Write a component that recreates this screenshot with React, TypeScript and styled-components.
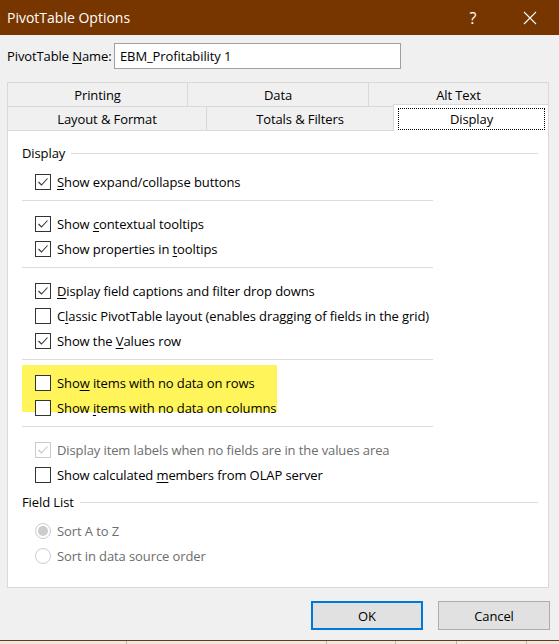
import React from 'react';
import styled, { createGlobalStyle } from 'styled-components';

const GlobalStyle = createGlobalStyle`
  html, body {
    margin: 0;
    padding: 0;
    background: #f0f0f0;
    overflow: hidden;
  }
  body {
    font-family: 'Segoe UI', 'Open Sans', 'Noto Sans', sans-serif;
    font-size: 13px;
    letter-spacing: -0.1px;
    color: #000;
  }
  * { box-sizing: border-box; }
`;

const Window = styled.div`
  width: 559px;
  height: 644px;
  display: flex;
  flex-direction: column;
`;

const Dialog = styled.div`
  height: 641px;
  background: #f0f0f0;
  border-bottom: 1px solid #773600;
  display: flex;
  flex-direction: column;
`;

const TitleBar = styled.div`
  height: 35px;
  background: #773600;
  color: #fff;
  display: flex;
  align-items: center;
  padding: 0 6px 0 7px;
  flex-shrink: 0;
`;

const Title = styled.div`
  flex: 1;
  font-size: 14px;
  letter-spacing: 0;
`;

const CaptionButton = styled.div<{ $gap?: number }>`
  width: 46px;
  height: 35px;
  margin-left: ${({ $gap }) => $gap ?? 0}px;
  display: flex;
  align-items: center;
  justify-content: center;
  font-size: 16px;
`;

const NameRow = styled.div`
  display: flex;
  align-items: center;
  margin: 8px 0 0 7px;
  height: 26px;
`;

const NameLabel = styled.label`
  width: 107px;
  white-space: nowrap;
`;

const NameInput = styled.div`
  width: 287px;
  height: 26px;
  border: 1px solid #a0a0a0;
  background: #fff;
  padding: 0 5px;
  display: flex;
  align-items: center;
`;

const TabStrip = styled.div`
  margin: 13px 0 0 7px;
  width: 542px;
  display: flex;
  flex-direction: column;
`;

const TabRow = styled.div`
  display: flex;
  height: 24px;
`;

const Tab = styled.div<{ $w: number; $last?: boolean }>`
  width: ${({ $w }) => $w}px;
  flex-shrink: 0;
  background: #f0f0f0;
  border-top: 1px solid #d9d9d9;
  border-left: 1px solid #d9d9d9;
  border-right: ${({ $last }) => ($last ? '1px solid #d9d9d9' : 'none')};
  display: flex;
  align-items: center;
  justify-content: center;
`;

const ActiveTab = styled.div<{ $w: number }>`
  width: ${({ $w }) => $w}px;
  flex-shrink: 0;
  margin-top: -2px;
  height: 27px;
  background: #fff;
  border: 1px solid #d9d9d9;
  border-bottom: none;
  padding: 3px 3px 1px 4px;
  z-index: 1;
`;

const FocusRing = styled.div`
  height: 100%;
  border: 1px dotted #000;
  display: flex;
  align-items: center;
  justify-content: center;
`;

const Panel = styled.div`
  margin-left: 7px;
  width: 542px;
  height: 458px;
  background: #fff;
  border: 1px solid #d9d9d9;
  padding: 13px 10px 0 14px;
  flex-shrink: 0;
`;

const GroupHeader = styled.div<{ $top?: number }>`
  display: flex;
  align-items: center;
  gap: 6px;
  height: 18px;
  margin-top: ${({ $top }) => $top ?? 0}px;
`;

const GroupLine = styled.div`
  flex: 1;
  height: 1px;
  background: #dcdcdc;
`;

const List = styled.div`
  margin-top: 7px;
  display: flex;
  flex-direction: column;
`;

const Separator = styled.div`
  width: 411px;
  height: 1px;
  background: #dcdcdc;
  margin: 6px 0 10px;
`;

const Highlight = styled.div`
  width: 255px;
  height: 47px;
  margin: -5px 0 8px;
  padding-top: 5px;
  background: #fff55a;
`;

const Row = styled.div<{ $disabled?: boolean }>`
  height: 25px;
  padding-left: 13px;
  display: flex;
  align-items: center;
  gap: 6px;
  white-space: nowrap;
  color: ${({ $disabled }) => ($disabled ? '#6d6d6d' : '#000')};
`;

const Box = styled.span<{ $disabled?: boolean }>`
  width: 16px;
  height: 16px;
  flex-shrink: 0;
  border: 1px solid ${({ $disabled }) => ($disabled ? '#cccccc' : '#333333')};
  background: #fff;
  display: flex;
  align-items: center;
  justify-content: center;
`;

const RadioCircle = styled.span`
  width: 16px;
  height: 16px;
  flex-shrink: 0;
  border: 1px solid #cccccc;
  border-radius: 50%;
  display: flex;
  align-items: center;
  justify-content: center;
`;

const RadioDot = styled.span`
  width: 10px;
  height: 10px;
  border-radius: 50%;
  background: #cccccc;
`;

const Key = styled.span`
  text-decoration: underline;
  text-underline-offset: 2px;
`;

const ButtonRow = styled.div`
  margin-top: 13px;
  display: flex;
  justify-content: flex-end;
  gap: 15px;
  padding-right: 9px;
`;

const Button = styled.div<{ $primary?: boolean }>`
  width: 112px;
  height: 29px;
  background: #e1e1e1;
  border: ${({ $primary }) => ($primary ? '2px solid #0078d7' : '1px solid #adadad')};
  display: flex;
  align-items: center;
  justify-content: center;
`;

const BehindStrip = styled.div`
  flex: 1;
  display: flex;
  background: #e9e9e9;
`;

const BehindCell = styled.div<{ $w: number }>`
  width: ${({ $w }) => $w}px;
  flex-shrink: 0;
  border-right: 1px solid #b5b5b5;
`;

const Check = ({ color }: { color: string }) => (
  <svg width="14" height="14" viewBox="0 0 14 14">
    <path d="M2.5 7 L5.5 10 L11.5 3.5" fill="none" stroke={color} strokeWidth="1.1" />
  </svg>
);

type Item = { label: React.ReactNode; checked?: boolean; disabled?: boolean };

const CheckRow = ({ label, checked, disabled }: Item) => (
  <Row $disabled={disabled}>
    <Box $disabled={disabled}>{checked && <Check color={disabled ? '#c4c4c4' : '#333'} />}</Box>
    <span>{label}</span>
  </Row>
);

const RadioRow = ({ label, selected }: { label: string; selected?: boolean }) => (
  <Row $disabled>
    <RadioCircle>{selected && <RadioDot />}</RadioCircle>
    <span>{label}</span>
  </Row>
);

export default function App() {
  return (
    <Window>
      <GlobalStyle />
      <Dialog>
        <TitleBar>
          <Title>PivotTable Options</Title>
          <CaptionButton>?</CaptionButton>
          <CaptionButton $gap={11}>
            <svg width="14" height="14" viewBox="0 0 14 14">
              <path d="M1 1 L13 13 M13 1 L1 13" stroke="#fff" strokeWidth="1.1" />
            </svg>
          </CaptionButton>
        </TitleBar>

        <NameRow>
          <NameLabel>
            PivotTable <Key>N</Key>ame:
          </NameLabel>
          <NameInput>EBM_Profitability 1</NameInput>
        </NameRow>

        <TabStrip>
          <TabRow>
            <Tab $w={180}>Printing</Tab>
            <Tab $w={181}>Data</Tab>
            <Tab $w={181} $last>Alt Text</Tab>
          </TabRow>
          <TabRow>
            <Tab $w={199}>Layout &amp; Format</Tab>
            <Tab $w={187}>Totals &amp; Filters</Tab>
            <ActiveTab $w={156}>
              <FocusRing>Display</FocusRing>
            </ActiveTab>
          </TabRow>
        </TabStrip>

        <Panel>
          <GroupHeader>
            <span>Display</span>
            <GroupLine />
          </GroupHeader>
          <List>
            <CheckRow checked label={<><Key>S</Key>how expand/collapse buttons</>} />
            <Separator />
            <CheckRow checked label={<>Show <Key>c</Key>ontextual tooltips</>} />
            <CheckRow checked label={<>Show properties in <Key>t</Key>ooltips</>} />
            <Separator />
            <CheckRow checked label={<><Key>D</Key>isplay field captions and filter drop downs</>} />
            <CheckRow label={<>C<Key>l</Key>assic PivotTable layout (enables dragging of fields in the grid)</>} />
            <CheckRow checked label={<>Show the <Key>V</Key>alues row</>} />
            <Separator />
            <Highlight>
              <CheckRow label={<>Sho<Key>w</Key> items with no data on rows</>} />
              <CheckRow label={<>Show <Key>i</Key>tems with no data on columns</>} />
            </Highlight>
            <Separator />
            <CheckRow checked disabled label="Display item labels when no fields are in the values area" />
            <CheckRow label={<>Show calculated <Key>m</Key>embers from OLAP server</>} />
          </List>

          <GroupHeader $top={6}>
            <span>Field List</span>
            <GroupLine />
          </GroupHeader>
          <List>
            <RadioRow selected label="Sort A to Z" />
            <RadioRow label="Sort in data source order" />
          </List>
        </Panel>

        <ButtonRow>
          <Button $primary>OK</Button>
          <Button>Cancel</Button>
        </ButtonRow>
      </Dialog>
      <BehindStrip>
        <BehindCell $w={127} />
        <BehindCell $w={200} />
        <BehindCell $w={69} />
        <BehindCell $w={61} />
        <BehindCell $w={70} />
      </BehindStrip>
    </Window>
  );
}
